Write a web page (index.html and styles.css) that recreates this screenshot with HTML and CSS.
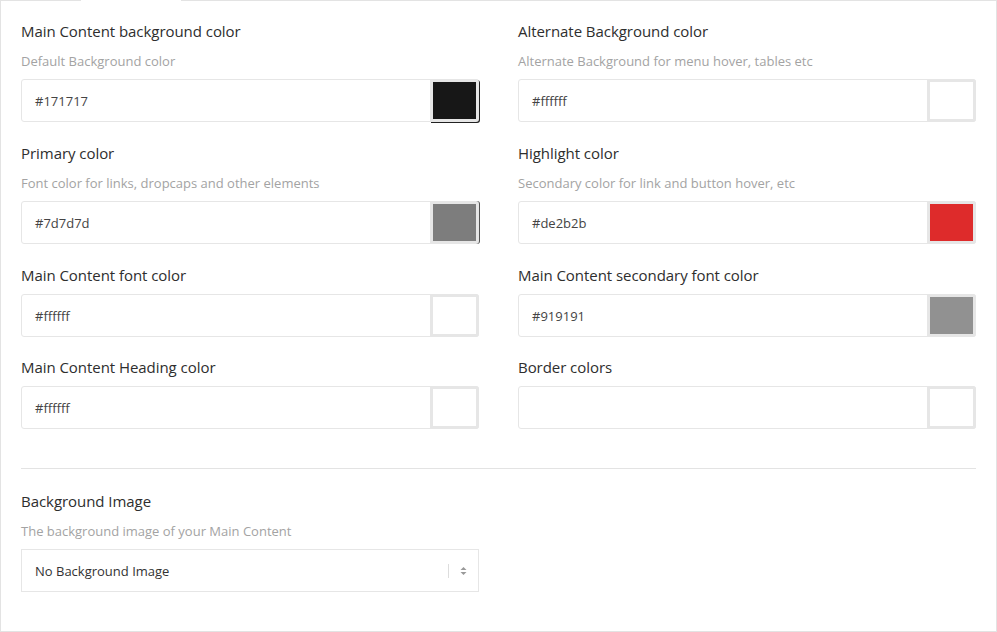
FILE: index.html
```html
<!DOCTYPE html>
<html>
<head>
<meta charset="utf-8">
<link rel="stylesheet" href="styles.css">
</head>
<body>
<div class="panel">
  <div class="grid">
    <div class="field">
      <div class="label">Main Content background color</div>
      <div class="desc">Default Background color</div>
      <div class="input"><span class="hex">#171717</span><span class="swatch edge-dark" style="background:#171717"></span></div>
    </div>
    <div class="field">
      <div class="label">Alternate Background color</div>
      <div class="desc">Alternate Background for menu hover, tables etc</div>
      <div class="input"><span class="hex">#ffffff</span><span class="swatch" style="background:#ffffff"></span></div>
    </div>
    <div class="field">
      <div class="label">Primary color</div>
      <div class="desc">Font color for links, dropcaps and other elements</div>
      <div class="input"><span class="hex">#7d7d7d</span><span class="swatch edge-gray" style="background:#7d7d7d"></span></div>
    </div>
    <div class="field">
      <div class="label">Highlight color</div>
      <div class="desc">Secondary color for link and button hover, etc</div>
      <div class="input"><span class="hex">#de2b2b</span><span class="swatch" style="background:#de2b2b"></span></div>
    </div>
    <div class="field">
      <div class="label">Main Content font color</div>
      <div class="input"><span class="hex">#ffffff</span><span class="swatch" style="background:#ffffff"></span></div>
    </div>
    <div class="field">
      <div class="label">Main Content secondary font color</div>
      <div class="input"><span class="hex">#919191</span><span class="swatch" style="background:#919191"></span></div>
    </div>
    <div class="field tight">
      <div class="label">Main Content Heading color</div>
      <div class="input"><span class="hex">#ffffff</span><span class="swatch" style="background:#ffffff"></span></div>
    </div>
    <div class="field tight">
      <div class="label">Border colors</div>
      <div class="input"><span class="hex"></span><span class="swatch" style="background:#ffffff"></span></div>
    </div>
  </div>
  <hr class="divider">
  <div class="grid">
    <div class="field">
      <div class="label">Background Image</div>
      <div class="desc">The background image of your Main Content</div>
      <div class="select">
        <span class="select-text">No Background Image</span>
        <span class="select-sep"></span>
        <span class="select-arrows">
          <svg width="7" height="10" viewBox="0 0 7 10"><path d="M0.5 4 L3.5 1 L6.5 4 Z" fill="#999"/><path d="M0.5 6 L3.5 9 L6.5 6 Z" fill="#999"/></svg>
        </span>
      </div>
    </div>
  </div>
</div>
</body>
</html>
```
FILE: styles.css
```css
* { box-sizing: border-box; }
html, body { margin: 0; padding: 0; background: #fff; }
body {
  font-family: "Open Sans", "Liberation Sans", sans-serif;
  color: #333;
}
.panel {
  position: relative;
  width: 997px;
  height: 632px;
  border: 1px solid #e3e3e3;
  padding: 20px 20px 0 20px;
}
.panel::before {
  content: "";
  position: absolute;
  top: -1px;
  left: 80px;
  width: 100px;
  height: 1px;
  background: #fff;
}
.grid {
  display: grid;
  grid-template-columns: 458px 458px;
  column-gap: 39px;
  row-gap: 21px;
}
.field.tight { margin-top: -1px; }
.label {
  font-size: 15px;
  line-height: 20px;
  color: #2e2e2e;
  margin-bottom: 9px;
  letter-spacing: -0.05px;
}
.desc {
  font-size: 13px;
  line-height: 22px;
  color: #a3a3a3;
  margin-bottom: 7px;
}
.input {
  display: flex;
  height: 43px;
  border: 1px solid #e6e6e6;
  border-radius: 3px;
  align-items: stretch;
}
.hex {
  flex: 1;
  display: flex;
  align-items: center;
  padding-left: 13px;
  font-size: 13px;
  color: #444;
}
.swatch {
  width: 49px;
  margin: -1px -1px -1px 0;
  border: 3px solid #e6e6e6;
  border-radius: 0 3px 3px 0;
}
.edge-dark { box-shadow: 1px 1px 0 #222; }
.edge-gray { box-shadow: 1px 0 0 #555; }
.divider {
  border: 0;
  border-top: 1px solid #e3e3e3;
  margin: 39px 0 22px 0;
  height: 0;
}
.select {
  display: flex;
  align-items: center;
  height: 43px;
  border: 1px solid #e6e6e6;
  font-size: 13px;
  color: #333;
}
.select-text {
  flex: 1;
  padding-left: 13px;
}
.select-sep {
  width: 1px;
  height: 14px;
  background: #ddd;
}
.select-arrows {
  width: 29px;
  display: flex;
  justify-content: center;
  align-items: center;
}
.select-arrows svg { display: block; }
```
